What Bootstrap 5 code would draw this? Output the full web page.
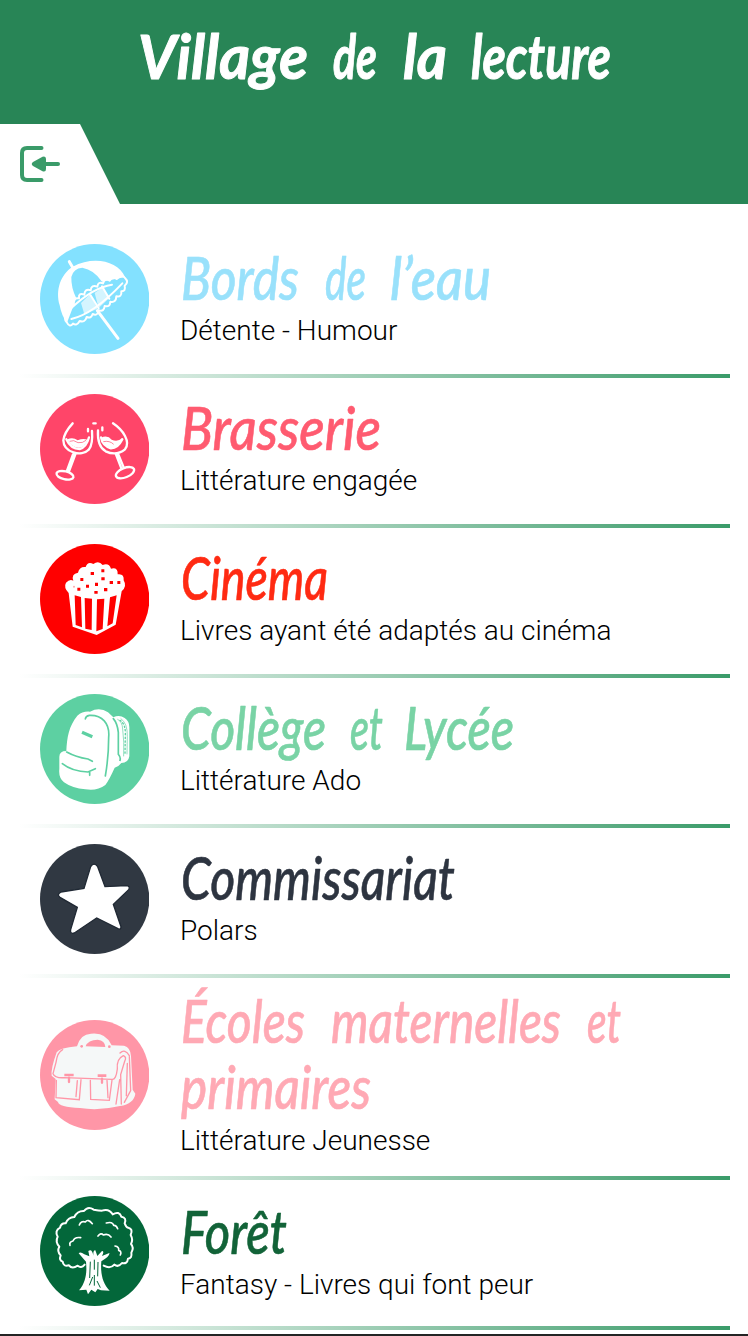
<!DOCTYPE html>
<html lang="fr">
<head>
<meta charset="utf-8">
<meta name="viewport" content="width=device-width, initial-scale=1">
<title>Village de la lecture</title>
<link href="https://cdn.jsdelivr.net/npm/bootstrap@5.3.0/dist/css/bootstrap.min.css" rel="stylesheet">
<style>
body{font-family:Roboto,"Liberation Sans",sans-serif;color:#000;height:1336px;overflow:hidden;border-bottom:2px solid #242424}
.top-banner{background:#288556;height:204px}
.back-tab{width:120px;height:80px;padding:22px 0 0 20px;clip-path:polygon(0 0,80px 0,120px 100%,0 100%);background:#fff}
.places{padding:24px 18px 0 20px}
.place{height:150px;padding-left:20px;border-bottom:4px solid;border-image:linear-gradient(to right,#fff 0,#3a9b69 100%) 1}
.place.tall{height:202px}
.place.low .place-text{padding-top:4px}
.place-icon{width:109px;height:110px;margin:-4px 31px 0 0}
.hand{display:block;width:530px;height:66px;overflow:visible;font-family:Lato,sans-serif;font-style:italic;font-size:60px;fill:currentColor;stroke:currentColor;stroke-width:.6;stroke-linejoin:round}
.banner-title{width:748px;height:124px;font-weight:700;font-size:61px;stroke-width:1}
.genre{font-size:28px;line-height:40px;font-weight:300;margin:-3px 0 3px}
.tall .genre{margin:-2px 0 2px}
.ln{fill:none;stroke:#fff;stroke-linecap:round;stroke-linejoin:round}
</style>
</head>
<body class="bg-white">
<header class="top-banner text-white">
<h1 class="m-0"><svg class="hand banner-title"><text x="138" y="79" textLength="170" lengthAdjust="spacingAndGlyphs">Village</text> <text x="333" y="79" textLength="44" lengthAdjust="spacingAndGlyphs">de</text> <text x="403" y="79" textLength="44" lengthAdjust="spacingAndGlyphs">la</text> <text x="471" y="79" textLength="140" lengthAdjust="spacingAndGlyphs">lecture</text></svg></h1>
<a class="back-tab d-block" href="#" aria-label="Retour"><svg class="d-block" width="41" height="36" viewBox="0 0 41 36"><path d="M21.500 2H7Q2 2 2 7V29Q2 34 7 34H21.500" fill="none" stroke="#3a9b69" stroke-width="4" stroke-linecap="round"/><path d="M25 18H38" stroke="#3a9b69" stroke-width="4" stroke-linecap="round"/><path d="M13 16 22.500 10.700Q26 9.500 26 13V23Q26 26.500 22.500 25.300L13 20Q10.500 18 13 16Z" fill="#3a9b69"/></svg></a>
</header>
<main class="places">

<section class="place d-flex align-items-center">
<svg class="place-icon flex-shrink-0" viewBox="30 27 327 330"><ellipse cx="194" cy="192" rx="164" ry="165" fill="#83e1ff"/>
<path d="M128 95C91 119 76 165 89 211Q95 244 111 263L139 190Q123 158 124 126Q130 100 157 98Q192 104 216 140L285 126C264 77 190 62 128 95Z" fill="#fff"/>
<path class="ln" stroke-width="9" d="M118 80 129 99M202 227 264 310"/>
<path d="M153 204 180 178 203 221 163 238ZM194 174 217 157 237 190 206 219Z" fill="#fff" opacity=".65"/>
<path class="ln" stroke-width="6" d="M111 263Q98 248 112 240Q104 224 119 222Q113 204 131 206Q128 188 147 190Q145 172 163 179Q164 160 182 166Q184 148 202 155Q205 138 219 145Q225 127 239 137Q248 122 260 132Q276 117 285 129Q298 141 284 152Q288 170 274 169Q276 187 259 184Q258 204 241 200Q240 218 224 213Q222 231 207 226Q203 244 188 237Q183 252 170 246Q165 264 149 258Q140 274 129 266Q119 279 111 263M124 252Q190 237 277 145M124 219Q190 157 246 149M180 178 206 220M216 154 238 191"/></svg>
<div class="place-text"><h2 class="m-0" style="color:#99e1fb"><svg class="hand"><text x="1" y="52" textLength="118" lengthAdjust="spacingAndGlyphs">Bords</text> <text x="145" y="52" textLength="41" lengthAdjust="spacingAndGlyphs">de</text> <text x="210" y="52" textLength="101" lengthAdjust="spacingAndGlyphs">l’eau</text></svg></h2><div class="genre">Détente - Humour</div></div>
</section>

<section class="place d-flex align-items-center">
<svg class="place-icon flex-shrink-0" viewBox="30 27 327 330"><ellipse cx="194" cy="192" rx="164" ry="165" fill="#ff4569"/>
<g class="ln" stroke-width="7"><path d="M128 115Q103 142 100 166C101 203 154 217 177 193Q189 177 186 138M109 163Q122 192 149 192Q169 188 177 157M136 208 117 259M129 208 111 257M249 115C279 135 303 170 285 193Q259 214 227 199Q201 184 204 136M213 157Q217 182 243 190Q264 190 277 163M257 206 274 250M264 206 281 247"/><ellipse cx="105" cy="271" rx="26" ry="12" transform="rotate(13 105 271)"/><ellipse cx="285" cy="263" rx="29" ry="14" transform="rotate(-22 285 263)"/><path d="M174 139V132M190 115H197M217 127V136"/></g><path d="M112 163Q129 155 143 166Q159 159 172 164Q164 189 146 188Q122 187 112 163ZM213 158Q233 149 245 164Q263 172 277 159Q266 190 244 188Q221 184 213 158Z" fill="#fff"/><path d="M119 169Q131 163 144 173Q158 175 168 166M220 170Q239 166 251 178" fill="none" stroke="#ff4569" stroke-width="2"/></svg>
<div class="place-text"><h2 class="m-0" style="color:#ff5b70"><svg class="hand"><text x="1" y="52" textLength="200" lengthAdjust="spacingAndGlyphs">Brasserie</text></svg></h2><div class="genre">Littérature engagée</div></div>
</section>

<section class="place d-flex align-items-center">
<svg class="place-icon flex-shrink-0" viewBox="30 27 327 330"><ellipse cx="194" cy="192" rx="164" ry="165" fill="#f00"/>
<path d="M116 174Q100 157 108 143Q119 131 130 137Q123 116 144 113Q148 94 167 96Q173 78 190 87Q206 75 218 90Q237 83 243 101Q264 96 263 118Q283 115 281 136Q292 154 275 169L257 269 200 300 128 275Z" fill="#fff"/>
<path d="M134 181 153 186 156 277 137 270ZM164 189 186 191 185 285 166 281ZM201 193 223 191 218 282 199 289ZM240 187 260 181 248 265 232 274Z" fill="#f00"/>
<path d="M182 111h10v9h-10zM214 103h9v9h-9zM151 129h9v9h-9zM214 127h10v9h-10zM239 138h10v9h-10zM262 138h9v9h-9zM195 143h9v10h-9zM168 149h9v9h-9zM142 158h9v9h-9zM222 159h10v10h-10zM193 168h10v8h-10z" fill="#f00"/><circle cx="132" cy="155" r="3" fill="#faa"/></svg>
<div class="place-text"><h2 class="m-0" style="color:#ff2a12"><svg class="hand"><text x="1" y="52" textLength="147" lengthAdjust="spacingAndGlyphs">Cinéma</text></svg></h2><div class="genre">Livres ayant été adaptés au cinéma</div></div>
</section>

<section class="place d-flex align-items-center">
<svg class="place-icon flex-shrink-0" viewBox="30 27 327 330"><ellipse cx="194" cy="192" rx="164" ry="165" fill="#5dd0a2"/>
<path d="M109 198C111 158 116 124 142 92Q158 78 180 80Q209 65 234 82L250 97Q268 88 284 99Q298 108 298 127V214Q295 234 274 234Q267 244 254 248Q238 284 226 300Q201 319 166 313Q127 310 102 292Q85 279 88 252V215Q88 198 109 198Z" fill="#fff"/>
<g fill="none" stroke="#5dd0a2" stroke-width="5" stroke-linecap="round"><path d="M166 102Q167 93 178 91C216 89 240 115 236 157Q236 215 226 273M110 201Q137 216 174 222L187 229M97 236Q127 260 174 261L196 251M179 262V271M250 101Q262 115 265 142V208Q273 218 270 226"/><path stroke-width="10" stroke-linecap="butt" d="M156 142 187 155"/><path stroke-width="2" d="M263 103Q277 110 278 132Q283 170 281 213M273 101Q293 115 292 154L291 207"/><path stroke-width="4" stroke-dasharray="4 7" d="M270 106Q287 117 286 148L285 207"/></g></svg>
<div class="place-text"><h2 class="m-0" style="color:#79d3a5"><svg class="hand"><text x="1" y="52" textLength="145" lengthAdjust="spacingAndGlyphs">Collège</text> <text x="170" y="52" textLength="33" lengthAdjust="spacingAndGlyphs">et</text> <text x="224" y="52" textLength="110" lengthAdjust="spacingAndGlyphs">Lycée</text></svg></h2><div class="genre">Littérature Ado</div></div>
</section>

<section class="place d-flex align-items-center">
<svg class="place-icon flex-shrink-0" viewBox="30 27 327 330"><ellipse cx="194" cy="192" rx="164" ry="165" fill="#303842"/>
<path d="M182 95Q192 80 203 95L225 155 289 152Q302 153 296 164L250 208 273 275Q273 285 264 281L200 249 133 294Q119 298 122 284L142 217 90 187Q79 179 93 171L162 160Z" fill="#fff" stroke="#202934" stroke-width="4"/></svg>
<div class="place-text"><h2 class="m-0" style="color:#2d3440"><svg class="hand"><text x="1" y="52" textLength="274" lengthAdjust="spacingAndGlyphs">Commissariat</text></svg></h2><div class="genre">Polars</div></div>
</section>

<section class="place tall d-flex align-items-center">
<svg class="place-icon flex-shrink-0" viewBox="30 30 327 330"><ellipse cx="194" cy="195" rx="164" ry="165" fill="#ff96a7"/>
<path d="M80 127Q89 114 141 109Q151 72 183 71Q228 66 245 106L282 107Q302 112 303 139L308 239 316 251Q312 281 270 288Q206 303 150 294Q86 291 84 276L74 268 77 207 65 197Q62 177 80 127Z" fill="#f5f8f8"/>
<path d="M167 109Q174 89 203 89Q225 91 226 111Z" fill="#ff96a7"/>
<g fill="none" stroke="#ff96a7" stroke-width="4" stroke-linecap="round"><path d="M98 119Q82 127 78 157L69 191Q75 205 103 203L246 208Q258 210 262 177Q259 147 280 137Q291 141 284 154L272 194 274 282M298 139 302 242 283 277M270 129Q285 115 298 137M79 211 78 263 148 269 153 209M142 212 138 260M181 211 182 268 238 271 246 210M231 211 234 263M292 160 289 257M269 209 258 282"/><path stroke-width="8" stroke-linecap="butt" d="M103 195H131M203 197H229"/><path stroke-width="7" d="M117 203V216M216 206V218"/></g><circle cx="155" cy="109" r="4" fill="#ff96a7"/><circle cx="238" cy="110" r="4" fill="#ff96a7"/></svg>
<div class="place-text"><h2 class="m-0" style="color:#ffa9b4"><svg class="hand"><text x="1" y="52" textLength="124" lengthAdjust="spacingAndGlyphs">Écoles</text> <text x="151" y="52" textLength="230" lengthAdjust="spacingAndGlyphs">maternelles</text> <text x="407" y="52" textLength="34" lengthAdjust="spacingAndGlyphs">et</text></svg><svg class="hand"><text x="1" y="52" textLength="190" lengthAdjust="spacingAndGlyphs">primaires</text></svg></h2><div class="genre">Littérature Jeunesse</div></div>
</section>

<section class="place low d-flex align-items-center">
<svg class="place-icon flex-shrink-0" viewBox="30 31 327 330"><ellipse cx="194" cy="196" rx="164" ry="165" fill="#03673a"/>
<g class="ln" stroke-width="6"><path d="M164 237Q153 250 143 240Q126 251 117 239Q100 244 98 228Q86 224 92 209Q80 196 88 183Q75 168 83 153Q73 135 90 126Q93 112 107 113Q114 95 133 94Q142 75 162 76Q174 60 191 72Q207 75 216 75Q237 68 248 86Q268 75 274 93Q291 96 284 113Q289 126 295 126Q310 130 302 148Q310 162 303 175Q313 186 304 201Q307 218 294 219Q292 236 276 232Q265 246 253 237Q241 251 221 240"/><path stroke-width="5" d="M148 118Q153 104 166 109Q174 98 187 114M229 112Q248 107 251 119Q259 118 263 129M204 151Q213 140 220 148Q234 142 243 154M120 179Q117 168 129 166Q134 153 152 156M255 181Q268 183 266 194Q276 197 271 208"/></g>
<path d="M146 203Q151 197 163 206L178 212 175 196Q186 187 190 210Q189 193 196 194L202 211 216 196Q224 196 216 211L238 202Q241 211 214 227C211 262 217 293 239 315L213 314 203 310 196 320 184 312 174 326 169 312 147 314C172 286 170 249 168 228Z" fill="#fff"/><path d="M181 228 179 277M193 222V252M204 229 203 272M188 274 178 299M193 268V300M201 286 211 306" stroke="#03673a" stroke-width="3"/></svg>
<div class="place-text"><h2 class="m-0" style="color:#126338"><svg class="hand"><text x="1" y="52" textLength="106" lengthAdjust="spacingAndGlyphs">Forêt</text></svg></h2><div class="genre">Fantasy - Livres qui font peur</div></div>
</section>
</main>
<script src="https://cdn.jsdelivr.net/npm/bootstrap@5.3.0/dist/js/bootstrap.bundle.min.js"></script>
</body>
</html>
